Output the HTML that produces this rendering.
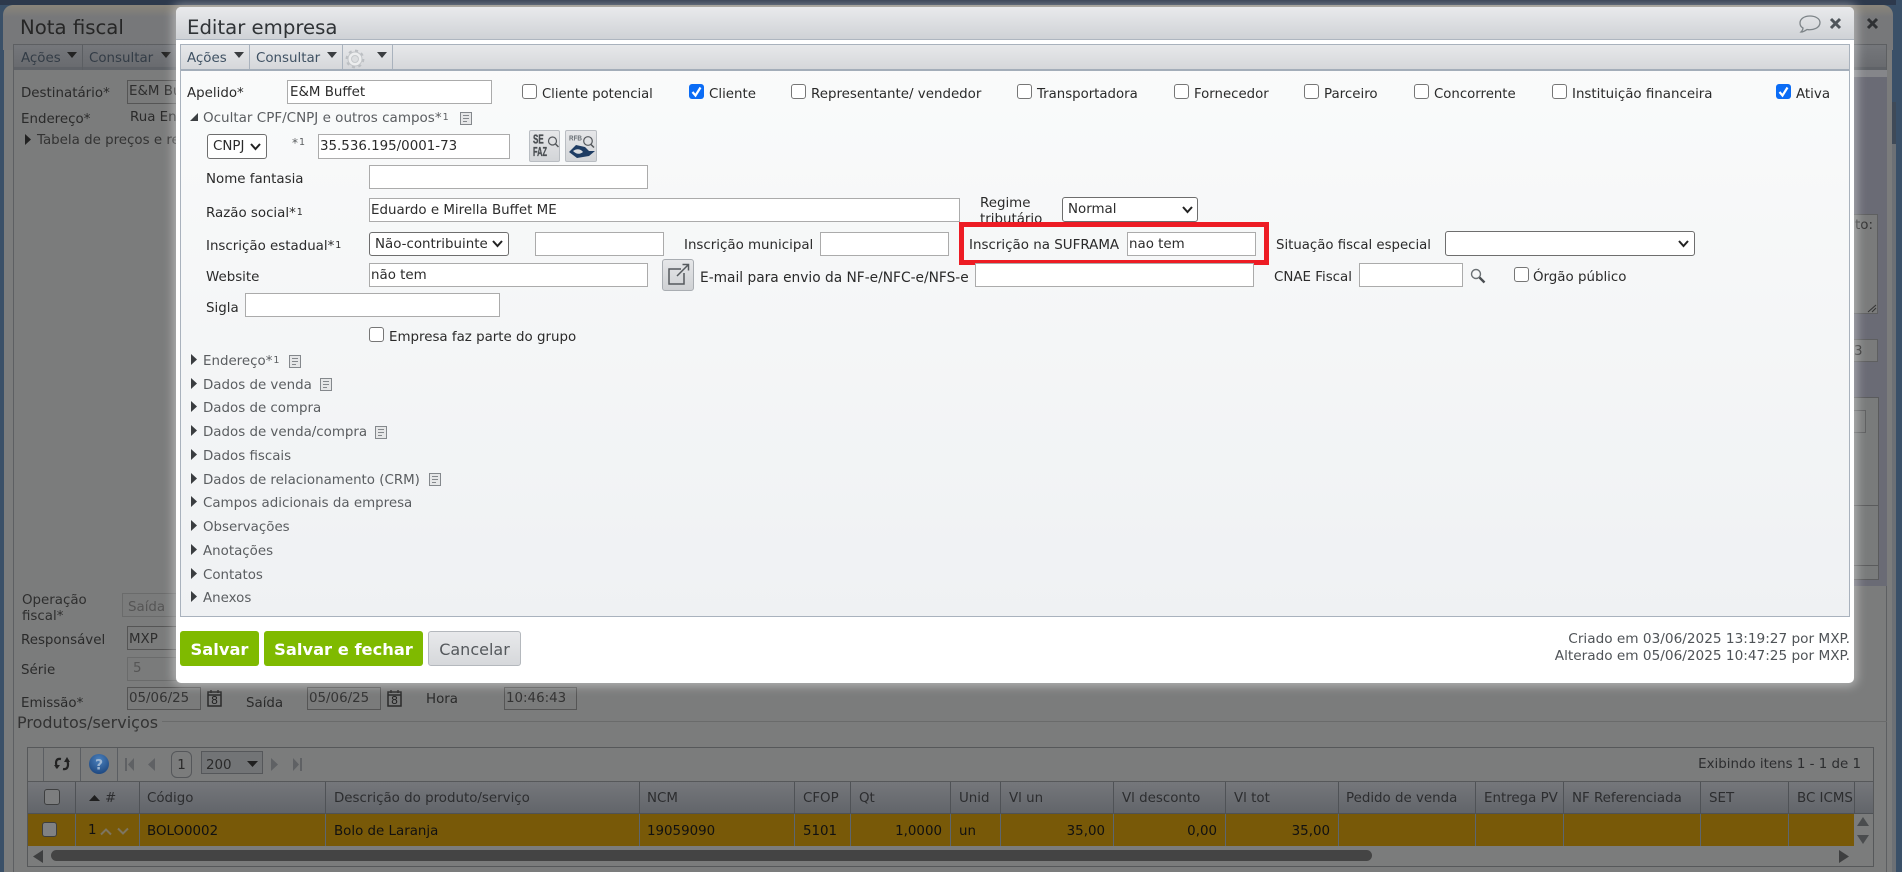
<!DOCTYPE html>
<html lang="pt-BR"><head><meta charset="utf-8"><title>Editar empresa</title>
<style>
html,body{margin:0;padding:0;width:1902px;height:872px;overflow:hidden;background:#3a5068}
body{position:relative;font-family:"DejaVu Sans","Liberation Sans",sans-serif;font-size:13.4px;color:#2a2a2a}
div,span{position:absolute;box-sizing:border-box;white-space:nowrap}
i{font-style:normal;font-size:9.5px;vertical-align:2px;margin-left:1px}
.t{line-height:16px;height:16px;transform:translateY(2px)}
.g{color:#5a5d60}
.i{background:#fff;border:1px solid #ababab;line-height:24px;padding-left:1px;color:#2b2b2b}
.s{background:#fff;border:1px solid #6e6e6e;border-radius:3px;line-height:24px;color:#2b2b2b}
.c{width:15px;height:15px;border:1px solid #767676;border-radius:3px;background:#fff}
.k{width:15px;height:15px;border-radius:3px;background:#0b6cf5}
.b{background:#7a7b7b;border:1px solid #555;line-height:22px;padding-left:1px;color:#2e2e2e}
.d{background:#7a7b7b;border:1px solid #6a6b6b;line-height:22px;color:#555}
.v{width:1px;background:#5b5e62}
.h{top:797px;margin-top:-8px;color:#2c2d2f}
.r{top:830px;margin-top:-8px;color:#111}
.rl{background:#5c6670;width:1px;top:814px;height:32px}
.hl{background:#4f5256;width:1px;top:782px;height:32px}
svg{position:absolute;overflow:visible}
</style></head><body>

<!-- BACKGROUND WINDOW -->
<div style="left:0;top:0;width:1902px;height:5px;background:#2d394c"></div>
<div style="left:4px;top:5px;width:1888px;height:867px;background:#7b7c7c;border-radius:10px 10px 0 0"></div>
<div style="left:3px;top:5px;width:1890px;height:45px;border-radius:10px 10px 0 0;background:linear-gradient(#8a857a,#77787a 12px);"></div>
<div style="left:1892px;top:102px;width:4px;height:770px;background:#6c7075"></div>
<div style="left:1892px;top:102px;width:4px;height:42px;background:#3f4a58"></div>
<div style="left:1896px;top:0;width:6px;height:872px;background:#3a5068"></div>
<div style="left:13px;top:44px;width:1874px;height:828px;border:1px solid #5d5f62;border-bottom:0"></div>
<div style="left:14px;top:45px;width:1872px;height:25px;background:linear-gradient(#75777b,#696b6f);border-bottom:3px solid #5f6267"></div>
<div style="left:1854px;top:70px;width:33px;height:7px;background:#85868a"></div>
<div style="left:1854px;top:77px;width:33px;height:509px;background:#6a6b75"></div>
<span class="t" style="left:20px;top:15px;font-size:19.7px;line-height:22px;height:22px;color:#262626">Nota fiscal</span>
<span class="t" style="left:21px;top:49px;color:#333c46">Ações</span>
<svg style="left:67px;top:52px" width="10" height="6"><path d="M0 0H10L5 6Z" fill="#222"/></svg>
<div class="v" style="left:82px;top:45px;height:25px"></div>
<span class="t" style="left:89px;top:49px;color:#333c46">Consultar</span>
<svg style="left:161px;top:52px" width="10" height="6"><path d="M0 0H10L5 6Z" fill="#222"/></svg>

<span class="t" style="left:21px;top:84px">Destinatário*</span>
<div class="b" style="left:127px;top:80px;width:60px;height:24px">E&amp;M Bu</div>
<span class="t" style="left:21px;top:110px">Endereço*</span>
<span class="t" style="left:130px;top:108px">Rua End</span>
<svg style="left:25px;top:134px" width="6" height="11"><path d="M0 0L6 5.500L0 11Z" fill="#222"/></svg>
<span class="t" style="left:37px;top:131px;color:#333">Tabela de preços e re</span>

<div class="s" style="left:1800px;top:214px;width:78px;height:100px;background:#7a7b7b;border:1px solid #5e5f60;border-radius:0"></div>
<span class="t" style="left:1855px;top:216px;color:#333">to:</span>
<svg style="left:1867px;top:303px" width="10" height="10"><path d="M1 9L9 2M5 9L9 5" stroke="#333" stroke-width="1"/></svg>
<div class="b" style="left:1800px;top:339px;width:78px;height:23px;border-color:#5e5f60"></div>
<span class="t" style="left:1854px;top:342px;color:#333">3</span>
<div style="left:1800px;top:397px;width:79px;height:183px;border:1px solid #5a5b5c;background:#797b7b"></div>
<div style="left:1800px;top:410px;width:66px;height:23px;border:1px solid #5e5f60;background:#7a7b7b"></div>
<div style="left:1800px;top:505px;width:79px;height:1px;background:#5a5b5c"></div>
<div style="left:1800px;top:565px;width:79px;height:1px;background:#5a5b5c"></div>

<span class="t" style="left:22px;top:591px;color:#2e2e2e">Operação</span>
<span class="t" style="left:22px;top:607px;color:#2e2e2e">fiscal*</span>
<div class="d" style="left:122px;top:593px;width:60px;height:24px;padding-left:5px;line-height:27px">Saída</div>
<span class="t" style="left:21px;top:631px">Responsável</span>
<div class="b" style="left:127px;top:626px;width:60px;height:24px;line-height:25px">MXP</div>
<span class="t" style="left:21px;top:661px">Série</span>
<div class="d" style="left:127px;top:657px;width:60px;height:24px;padding-left:5px">5</div>
<span class="t" style="left:21px;top:694px">Emissão*</span>
<div class="b" style="left:127px;top:687px;width:74px;height:23px;color:#333">05/06/25</div>
<svg style="left:207px;top:690px" width="16" height="17" fill="none" stroke="#2a2a2a"><rect x="1" y="2" width="13" height="14" stroke-width="1.500"/><path d="M1 5H14M4 0V3M11 0V3" stroke-width="1.500"/></svg>
<span class="t" style="left:211px;top:691px;font-size:11px;color:#222">8</span>
<span class="t" style="left:246px;top:694px">Saída</span>
<div class="b" style="left:307px;top:687px;width:74px;height:23px;color:#333">05/06/25</div>
<svg style="left:387px;top:690px" width="16" height="17" fill="none" stroke="#2a2a2a"><rect x="1" y="2" width="13" height="14" stroke-width="1.500"/><path d="M1 5H14M4 0V3M11 0V3" stroke-width="1.500"/></svg>
<span class="t" style="left:391px;top:691px;font-size:11px;color:#222">8</span>
<span class="t" style="left:426px;top:690px">Hora</span>
<div class="b" style="left:504px;top:687px;width:73px;height:23px;color:#333">10:46:43</div>

<span class="t" style="left:17px;top:713px;font-size:16px;color:#333">Produtos/serviços</span>
<div style="left:162px;top:721px;width:1725px;height:1px;background:#6a6b6b"></div>

<!-- GRID -->
<div style="left:27px;top:747px;width:1847px;height:120px;border:1px solid #56585a;background:#7b7c7c"></div>
<div class="v" style="left:43px;top:748px;height:33px"></div>
<div class="v" style="left:80px;top:748px;height:33px"></div>
<div class="v" style="left:117px;top:748px;height:33px"></div>
<svg style="left:53px;top:756px" width="18" height="16" fill="none" stroke="#222" stroke-width="2.200"><path d="M8 3C3 2 2 6 4 12"/><path d="M1 9L4 13L7 9" fill="#222" stroke="none"/><path d="M10 13C15 14 16 9 14 4"/><path d="M11 6L14 1L17 6" fill="#222" stroke="none"/></svg>
<svg style="left:89px;top:754px" width="20" height="20"><defs><radialGradient id="hb" cx=".5" cy=".3" r=".8"><stop offset="0" stop-color="#4c82be"/><stop offset="1" stop-color="#174078"/></radialGradient></defs><circle cx="10" cy="10" r="10" fill="url(#hb)"/><text x="10" y="15.500" font-family="DejaVu Sans" font-weight="bold" font-size="14" fill="#9db6d2" text-anchor="middle">?</text></svg>
<svg style="left:125px;top:758px" width="10" height="13"><path d="M0 0H2V13H0ZM9 0V13L3 6.500Z" fill="#5f6164"/></svg>
<svg style="left:148px;top:758px" width="7" height="13"><path d="M7 0V13L0 6.500Z" fill="#5f6164"/></svg>
<div style="left:171px;top:751px;width:21px;height:27px;border:1px solid #55575a;border-radius:6px;text-align:center;line-height:27px;color:#2a2a2a">1</div>
<div style="left:201px;top:751px;width:62px;height:23px;border:1px solid #55575a;background:#727476;line-height:27px;padding-left:4px;color:#2a2a2a">200</div>
<svg style="left:247px;top:761px" width="11" height="6"><path d="M0 0H11L5.500 6Z" fill="#1f1f1f"/></svg>
<svg style="left:271px;top:758px" width="7" height="13"><path d="M0 0V13L7 6.500Z" fill="#5f6164"/></svg>
<svg style="left:293px;top:758px" width="9" height="13"><path d="M0 0V13L6 6.500ZM7 0H9V13H7Z" fill="#5f6164"/></svg>
<span class="t" style="right:41px;top:755px;color:#2c2d2f">Exibindo itens 1 - 1 de 1</span>

<div style="left:28px;top:781px;width:1845px;height:1px;background:#56585a"></div>
<div style="left:28px;top:782px;width:1826px;height:32px;background:linear-gradient(#75777b,#62656a);border-bottom:1px solid #4f5256"></div>
<div style="left:1854px;top:782px;width:19px;height:32px;background:linear-gradient(#75777b,#62656a);border-bottom:1px solid #4f5256"></div>
<div style="left:28px;top:814px;width:1826px;height:32px;background:#785908"></div>
<div class="hl" style="left:75px"></div><div class="hl" style="left:139px"></div><div class="hl" style="left:325px"></div><div class="hl" style="left:639px"></div><div class="hl" style="left:794px"></div><div class="hl" style="left:850px"></div><div class="hl" style="left:950px"></div><div class="hl" style="left:1000px"></div><div class="hl" style="left:1113px"></div><div class="hl" style="left:1225px"></div><div class="hl" style="left:1338px"></div><div class="hl" style="left:1475px"></div><div class="hl" style="left:1563px"></div><div class="hl" style="left:1700px"></div><div class="hl" style="left:1788px"></div><div class="hl" style="left:1854px"></div>
<div class="rl" style="left:75px"></div><div class="rl" style="left:139px"></div><div class="rl" style="left:325px"></div><div class="rl" style="left:639px"></div><div class="rl" style="left:794px"></div><div class="rl" style="left:850px"></div><div class="rl" style="left:950px"></div><div class="rl" style="left:1000px"></div><div class="rl" style="left:1113px"></div><div class="rl" style="left:1225px"></div><div class="rl" style="left:1338px"></div><div class="rl" style="left:1475px"></div><div class="rl" style="left:1563px"></div><div class="rl" style="left:1700px"></div><div class="rl" style="left:1788px"></div>

<div style="left:44px;top:789px;width:16px;height:16px;border:1px solid #3e3f40;border-radius:3px;background:#7d7e7f"></div>
<svg style="left:89px;top:795px" width="11" height="6"><path d="M0 6H11L5.500 0Z" fill="#1f1f1f"/></svg>
<span class="t h" style="left:105px">#</span>
<span class="t h" style="left:147px">Código</span>
<span class="t h" style="left:334px">Descrição do produto/serviço</span>
<span class="t h" style="left:647px">NCM</span>
<span class="t h" style="left:803px">CFOP</span>
<span class="t h" style="left:859px">Qt</span>
<span class="t h" style="left:959px">Unid</span>
<span class="t h" style="left:1009px">Vl un</span>
<span class="t h" style="left:1122px">Vl desconto</span>
<span class="t h" style="left:1234px">Vl tot</span>
<span class="t h" style="left:1346px">Pedido de venda</span>
<span class="t h" style="left:1484px">Entrega PV</span>
<span class="t h" style="left:1572px">NF Referenciada</span>
<span class="t h" style="left:1709px">SET</span>
<div style="left:1789px;top:789px;width:65px;height:18px;overflow:hidden"><span class="t" style="left:8px;top:0;color:#2c2d2f">BC ICMS</span></div>

<div style="left:42px;top:822px;width:15px;height:15px;border:1px solid #3e3f40;border-radius:3px;background:#808183"></div>
<span class="t r" style="left:88px;margin-top:-9px">1</span>
<svg style="left:100px;top:828px" width="12" height="7" fill="none" stroke="#7d7560" stroke-width="2"><path d="M1 6.500L6 1.500L11 6.500"/></svg>
<svg style="left:117px;top:828px" width="12" height="7" fill="none" stroke="#7d7560" stroke-width="2"><path d="M1 .5L6 5.500L11 .5"/></svg>
<span class="t r" style="left:147px">BOLO0002</span>
<span class="t r" style="left:334px">Bolo de Laranja</span>
<span class="t r" style="left:647px">19059090</span>
<span class="t r" style="left:803px">5101</span>
<span class="t r" style="right:960px">1,0000</span>
<span class="t r" style="left:959px">un</span>
<span class="t r" style="right:797px">35,00</span>
<span class="t r" style="right:685px">0,00</span>
<span class="t r" style="right:572px">35,00</span>

<svg style="left:1857px;top:817px" width="12" height="9"><path d="M0 9H12L6 0Z" fill="#4a4c4e"/></svg>
<svg style="left:1857px;top:835px" width="12" height="9"><path d="M0 0H12L6 9Z" fill="#4a4c4e"/></svg>
<svg style="left:33px;top:850px" width="10" height="13"><path d="M10 0V13L0 6.500Z" fill="#3e3f40"/></svg>
<div style="left:51px;top:850px;width:1321px;height:11px;border-radius:6px;background:#444"></div>
<svg style="left:1839px;top:850px" width="10" height="13"><path d="M0 0V13L10 6.500Z" fill="#3e3f40"/></svg>

<!-- MODAL -->
<div style="left:176px;top:7px;width:1678px;height:676px;background:#fff;border-radius:5px;box-shadow:0 0 10px 3px rgba(255,255,255,.42)"></div>
<div style="left:176px;top:7px;width:1678px;height:33px;border-radius:5px 5px 0 0;background:linear-gradient(#e9eaec,#cfd2d6);border-bottom:1px solid #aeb6c0"></div>
<span class="t" style="left:187px;top:15px;font-size:19.7px;line-height:22px;height:22px;color:#2f3336">Editar empresa</span>
<svg style="left:1799px;top:14px" width="22" height="20" fill="none" stroke="#7d8488" stroke-width="1.300"><path d="M11 2C5 2 1 5 1 9C1 11 2 13 4 14C4 16 3 17 2 18C5 18 7 16 8 15.500C14 16.500 21 14 21 8.500C21 4.500 16 2 11 2Z"/></svg>
<svg style="left:1830px;top:18px" width="11" height="11" stroke="#50565b" stroke-width="3"><path d="M1 1L10 10M10 1L1 10"/></svg>
<svg style="left:1867px;top:18px" width="11" height="11" stroke="#2e3033" stroke-width="3"><path d="M1 1L10 10M10 1L1 10"/></svg>

<div style="left:180px;top:44px;width:1670px;height:573px;border:1px solid #a9b2bd;background:linear-gradient(#fafbfb,#eff1f3)"></div>
<div style="left:181px;top:45px;width:1668px;height:26px;background:linear-gradient(#e7e8ea,#d5d7da);border-bottom:2px solid #a3adb9"></div>
<span class="t" style="left:187px;top:49px;color:#3f5163">Ações</span>
<svg style="left:234px;top:52px" width="10" height="6"><path d="M0 0H10L5 6Z" fill="#3a3d40"/></svg>
<div style="left:249px;top:45px;width:1px;height:24px;background:#a9b2bd"></div>
<span class="t" style="left:256px;top:49px;color:#3f5163">Consultar</span>
<svg style="left:327px;top:52px" width="10" height="6"><path d="M0 0H10L5 6Z" fill="#3a3d40"/></svg>
<div style="left:342px;top:45px;width:1px;height:24px;background:#a9b2bd"></div>
<svg style="left:345px;top:49px" width="20" height="20" fill="none"><circle cx="10" cy="10" r="8.200" stroke="#bcbfc3" stroke-width="2.400" stroke-dasharray="3 3.400"/><circle cx="10" cy="10" r="7" fill="#ecedee" stroke="#c2c5c8"/><circle cx="10" cy="10" r="3.500" fill="#dcdee0" stroke="#c6c9cc"/></svg>
<svg style="left:377px;top:52px" width="10" height="6"><path d="M0 0H10L5 6Z" fill="#3a3d40"/></svg>
<div style="left:392px;top:45px;width:1px;height:24px;background:#a9b2bd"></div>

<span class="t" style="left:187px;top:84px">Apelido*</span>
<div class="i" style="left:287px;top:80px;width:205px;height:24px;padding-left:2px">E&amp;M Buffet</div>

<div class="c" style="left:522px;top:84px"></div><span class="t" style="left:542px;top:85px;font-size:13.15px">Cliente potencial</span>
<div class="k" style="left:689px;top:84px"><svg style="left:2px;top:2px" width="11" height="11" fill="none" stroke="#fff" stroke-width="2.200"><path d="M1.500 6L4.500 9.500L9.500 1.500"/></svg></div><span class="t" style="left:709px;top:85px">Cliente</span>
<div class="c" style="left:791px;top:84px"></div><span class="t" style="left:811px;top:85px">Representante/ vendedor</span>
<div class="c" style="left:1017px;top:84px"></div><span class="t" style="left:1037px;top:85px;font-size:13.3px">Transportadora</span>
<div class="c" style="left:1174px;top:84px"></div><span class="t" style="left:1194px;top:85px;font-size:13.3px">Fornecedor</span>
<div class="c" style="left:1304px;top:84px"></div><span class="t" style="left:1324px;top:85px">Parceiro</span>
<div class="c" style="left:1414px;top:84px"></div><span class="t" style="left:1434px;top:85px;font-size:13.3px">Concorrente</span>
<div class="c" style="left:1552px;top:84px"></div><span class="t" style="left:1572px;top:85px">Instituição financeira</span>
<div class="k" style="left:1776px;top:84px"><svg style="left:2px;top:2px" width="11" height="11" fill="none" stroke="#fff" stroke-width="2.200"><path d="M1.500 6L4.500 9.500L9.500 1.500"/></svg></div><span class="t" style="left:1796px;top:85px">Ativa</span>

<svg style="left:190px;top:113px" width="8" height="8"><path d="M8 0V8H0Z" fill="#3d4043"/></svg>
<span class="t g" style="left:203px;top:108px;font-size:13.5px">Ocultar CPF/CNPJ e outros campos*<i>1</i></span>
<svg style="left:460px;top:112px" width="12" height="13" fill="none" stroke="#84888c"><rect x=".5" y=".5" width="11" height="12" fill="#e6e7e8"/><path d="M3 3.500H9M3 6.500H9M3 9.500H7"/></svg>

<div class="s" style="left:207px;top:134px;width:60px;height:25px;padding-left:5px">CNPJ</div>
<svg style="left:250px;top:143px" width="11" height="7" fill="none" stroke="#222" stroke-width="2"><path d="M1 1L5.500 6L10 1"/></svg>
<span class="t g" style="left:292px;top:133px;font-size:12px">*<i>1</i></span>
<div class="i" style="left:318px;top:134px;width:192px;height:25px">35.536.195/0001-73</div>

<div style="left:529px;top:130px;width:31px;height:32px;border:1px solid #b9bdc2;border-radius:2px;background:linear-gradient(#e6e7e9,#d3d5d8)"></div>
<svg style="left:529px;top:130px" width="31" height="32"><text x="4" y="13.500" font-family="Liberation Sans Narrow,Liberation Sans" font-weight="bold" font-size="12.500" fill="#4a4e52" stroke="#4a4e52" stroke-width=".35" textLength="10.700" lengthAdjust="spacingAndGlyphs">SE</text><text x="4" y="26" font-family="Liberation Sans Narrow,Liberation Sans" font-weight="bold" font-size="12.500" fill="#4a4e52" stroke="#4a4e52" stroke-width=".35" textLength="14" lengthAdjust="spacingAndGlyphs">FAZ</text><circle cx="23.500" cy="11" r="4" fill="none" stroke="#53575b" stroke-width="1.200"/><path d="M26.500 14L29.500 17" stroke="#53575b" stroke-width="1.500"/></svg>
<div style="left:565px;top:130px;width:32px;height:32px;border:1px solid #b9bdc2;border-radius:2px;background:linear-gradient(#e6e7e9,#d3d5d8)"></div>
<svg style="left:565px;top:130px" width="32" height="32"><text x="4" y="10.500" font-family="Liberation Sans Narrow,Liberation Sans" font-weight="bold" font-size="7.500" fill="#6a7075" textLength="13" lengthAdjust="spacingAndGlyphs">RFB</text><circle cx="23" cy="11" r="4.300" fill="none" stroke="#53575b" stroke-width="1.200"/><path d="M26 14.500L29 17.500" stroke="#53575b" stroke-width="1.500"/><path d="M4 22L11 15L20 17L24 21L30 21L24 26L12 28Z" fill="#1e3c63"/><path d="M8 21C12 18 16 19 18 22C14 25 11 24 8 21Z" fill="#d9dbde"/></svg>

<span class="t" style="left:206px;top:170px">Nome fantasia</span>
<div class="i" style="left:369px;top:165px;width:279px;height:24px"></div>
<span class="t" style="left:206px;top:203px">Razão social*<i>1</i></span>
<div class="i" style="left:369px;top:198px;width:591px;height:24px">Eduardo e Mirella Buffet ME</div>
<span class="t" style="left:980px;top:194px">Regime</span>
<span class="t" style="left:980px;top:210px">tributário</span>
<div class="s" style="left:1062px;top:197px;width:136px;height:25px;padding-left:5px">Normal</div>
<svg style="left:1182px;top:206px" width="11" height="7" fill="none" stroke="#222" stroke-width="2"><path d="M1 1L5.500 6L10 1"/></svg>

<span class="t" style="left:206px;top:236px">Inscrição estadual*<i>1</i></span>
<div class="s" style="left:369px;top:232px;width:140px;height:24px;padding-left:5px">Não-contribuinte</div>
<svg style="left:492px;top:240px" width="11" height="7" fill="none" stroke="#222" stroke-width="2"><path d="M1 1L5.500 6L10 1"/></svg>
<div class="i" style="left:535px;top:232px;width:129px;height:24px"></div>
<span class="t" style="left:684px;top:236px">Inscrição municipal</span>
<div class="i" style="left:820px;top:232px;width:129px;height:24px"></div>
<div style="left:959px;top:222px;width:310px;height:43px;border:5px solid #ed1c24"></div>
<span class="t" style="left:969px;top:236px;font-size:13.45px">Inscrição na SUFRAMA</span>
<div class="i" style="left:1127px;top:232px;width:129px;height:24px">nao tem</div>
<span class="t" style="left:1276px;top:236px;font-size:13.3px">Situação fiscal especial</span>
<div class="s" style="left:1445px;top:231px;width:250px;height:25px"></div>
<svg style="left:1678px;top:240px" width="11" height="7" fill="none" stroke="#222" stroke-width="2"><path d="M1 1L5.500 6L10 1"/></svg>

<span class="t" style="left:206px;top:268px">Website</span>
<div class="i" style="left:369px;top:263px;width:279px;height:24px">não tem</div>
<div style="left:662px;top:259px;width:32px;height:32px;border:1px solid #a9adb2;border-radius:3px;background:linear-gradient(#e6e7e9,#cfd1d4)"></div>
<svg style="left:662px;top:259px" width="32" height="32" fill="none" stroke="#55595d" stroke-width="1.500"><path d="M19 10H7V25H22V14"/><path d="M15 17L26 6M20.500 5.500H26.500V11.500"/></svg>
<span class="t" style="left:700px;top:268px;font-size:13.75px">E-mail para envio da NF-e/NFC-e/NFS-e</span>
<div class="i" style="left:975px;top:263px;width:279px;height:24px"></div>
<span class="t" style="left:1274px;top:268px">CNAE Fiscal</span>
<div class="i" style="left:1359px;top:263px;width:104px;height:24px"></div>
<svg style="left:1470px;top:268px" width="16" height="16" fill="none"><circle cx="6" cy="6" r="4.500" stroke="#6b7074" stroke-width="1.400"/><path d="M9.500 9.500L14.500 14.500" stroke="#4a4e52" stroke-width="2.400"/></svg>
<div class="c" style="left:1514px;top:267px"></div><span class="t" style="left:1533px;top:268px">Órgão público</span>

<span class="t" style="left:206px;top:299px">Sigla</span>
<div class="i" style="left:245px;top:293px;width:255px;height:24px"></div>
<div class="c" style="left:369px;top:327px"></div><span class="t" style="left:389px;top:328px">Empresa faz parte do grupo</span>

<svg style="left:191px;top:354px" width="6" height="11"><path d="M0 0L6 5.500L0 11Z" fill="#3a3d40"/></svg><span class="t g" style="left:203px;top:351px">Endereço*<i>1</i></span>
<svg style="left:289px;top:355px" width="12" height="13" fill="none" stroke="#84888c"><rect x=".5" y=".5" width="11" height="12" fill="#e6e7e8"/><path d="M3 3.500H9M3 6.500H9M3 9.500H7"/></svg>
<svg style="left:191px;top:378px" width="6" height="11"><path d="M0 0L6 5.500L0 11Z" fill="#3a3d40"/></svg><span class="t g" style="left:203px;top:376px">Dados de venda</span>
<svg style="left:320px;top:378px" width="12" height="13" fill="none" stroke="#84888c"><rect x=".5" y=".5" width="11" height="12" fill="#e6e7e8"/><path d="M3 3.500H9M3 6.500H9M3 9.500H7"/></svg>
<svg style="left:191px;top:401px" width="6" height="11"><path d="M0 0L6 5.500L0 11Z" fill="#3a3d40"/></svg><span class="t g" style="left:203px;top:399px">Dados de compra</span>
<svg style="left:191px;top:425px" width="6" height="11"><path d="M0 0L6 5.500L0 11Z" fill="#3a3d40"/></svg><span class="t g" style="left:203px;top:423px">Dados de venda/compra</span>
<svg style="left:375px;top:426px" width="12" height="13" fill="none" stroke="#84888c"><rect x=".5" y=".5" width="11" height="12" fill="#e6e7e8"/><path d="M3 3.500H9M3 6.500H9M3 9.500H7"/></svg>
<svg style="left:191px;top:449px" width="6" height="11"><path d="M0 0L6 5.500L0 11Z" fill="#3a3d40"/></svg><span class="t g" style="left:203px;top:447px">Dados fiscais</span>
<svg style="left:191px;top:473px" width="6" height="11"><path d="M0 0L6 5.500L0 11Z" fill="#3a3d40"/></svg><span class="t g" style="left:203px;top:471px">Dados de relacionamento (CRM)</span>
<svg style="left:429px;top:473px" width="12" height="13" fill="none" stroke="#84888c"><rect x=".5" y=".5" width="11" height="12" fill="#e6e7e8"/><path d="M3 3.500H9M3 6.500H9M3 9.500H7"/></svg>
<svg style="left:191px;top:496px" width="6" height="11"><path d="M0 0L6 5.500L0 11Z" fill="#3a3d40"/></svg><span class="t g" style="left:203px;top:494px">Campos adicionais da empresa</span>
<svg style="left:191px;top:520px" width="6" height="11"><path d="M0 0L6 5.500L0 11Z" fill="#3a3d40"/></svg><span class="t g" style="left:203px;top:518px">Observações</span>
<svg style="left:191px;top:544px" width="6" height="11"><path d="M0 0L6 5.500L0 11Z" fill="#3a3d40"/></svg><span class="t g" style="left:203px;top:542px">Anotações</span>
<svg style="left:191px;top:568px" width="6" height="11"><path d="M0 0L6 5.500L0 11Z" fill="#3a3d40"/></svg><span class="t g" style="left:203px;top:566px">Contatos</span>
<svg style="left:191px;top:591px" width="6" height="11"><path d="M0 0L6 5.500L0 11Z" fill="#3a3d40"/></svg><span class="t g" style="left:203px;top:589px">Anexos</span>

<div style="left:180px;top:631px;width:79px;height:35px;border-radius:3px;background:#7fba00;color:#fff;font-weight:bold;font-size:16.300px;line-height:37px;text-align:center">Salvar</div>
<div style="left:264px;top:631px;width:159px;height:35px;border-radius:3px;background:#7fba00;color:#fff;font-weight:bold;font-size:16.300px;line-height:37px;text-align:center">Salvar e fechar</div>
<div style="left:428px;top:631px;width:93px;height:35px;border-radius:3px;border:1px solid #b4b8bd;background:linear-gradient(#e8e9eb,#d6d8db);color:#54585c;font-size:16px;line-height:35px;text-align:center">Cancelar</div>
<span class="t" style="right:52px;top:629px;color:#4f5357;font-size:13.65px">Criado em 03/06/2025 13:19:27 por MXP.</span>
<span class="t" style="right:52px;top:646px;color:#4f5357;font-size:13.65px">Alterado em 05/06/2025 10:47:25 por MXP.</span>
</body></html>
